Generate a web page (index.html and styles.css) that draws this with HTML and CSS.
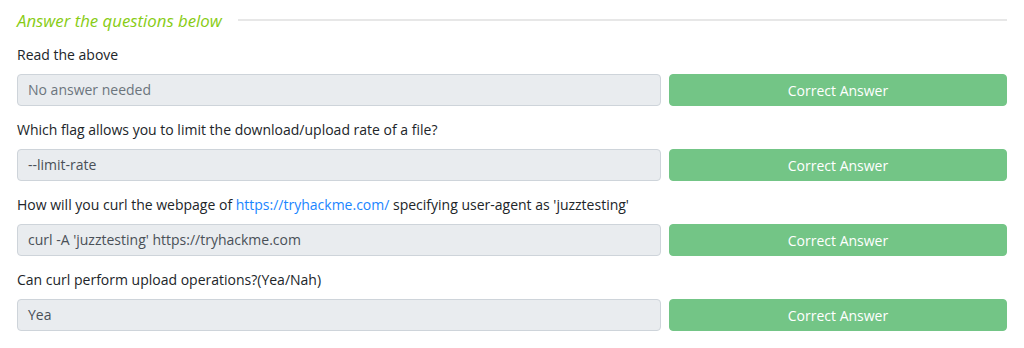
FILE: index.html
```html
<!DOCTYPE html>
<html lang="en">
<head>
<meta charset="utf-8">
<title>Answer the questions below</title>
<link rel="stylesheet" href="styles.css">
</head>
<body>
<section class="panel">
  <h2 class="heading"><span>Answer the questions below</span></h2>

  <div class="question">
    <p class="label">Read the above</p>
    <div class="row">
      <div class="answer placeholder">No answer needed</div>
      <button class="btn">Correct Answer</button>
    </div>
  </div>

  <div class="question">
    <p class="label">Which flag allows you to limit the download/upload rate of a file?</p>
    <div class="row">
      <div class="answer">--limit-rate</div>
      <button class="btn">Correct Answer</button>
    </div>
  </div>

  <div class="question">
    <p class="label">How will you curl the webpage of <a class="link" href="#">https://tryhackme.com/</a> specifying user-agent as 'juzztesting'</p>
    <div class="row">
      <div class="answer">curl -A 'juzztesting' https://tryhackme.com</div>
      <button class="btn">Correct Answer</button>
    </div>
  </div>

  <div class="question">
    <p class="label">Can curl perform upload operations?(Yea/Nah)</p>
    <div class="row">
      <div class="answer">Yea</div>
      <button class="btn">Correct Answer</button>
    </div>
  </div>
</section>
</body>
</html>
```
FILE: styles.css
```css
html, body {
  margin: 0;
  padding: 0;
  background: #ffffff;
}

body {
  font-family: "Open Sans", "Liberation Sans", sans-serif;
  font-size: 14px;
  color: #212529;
}

.panel {
  width: 990px;
  padding: 8px 17px 0 17px;
}

.heading {
  display: flex;
  align-items: center;
  gap: 16px;
  margin: 0;
  height: 24px;
  font-size: 16.8px;
  font-weight: 400;
  font-style: italic;
  color: #88cc14;
  white-space: nowrap;
}

.heading::after {
  content: "";
  flex: 1;
  height: 2px;
  background: #e7e7e7;
}

.question {
  margin-top: 12px;
}

.question + .question {
  margin-top: 13px;
}

.label {
  margin: 0 0 9px 0;
  line-height: 21px;
  color: #212529;
}

.link {
  color: #1a85ff;
  text-decoration: none;
}

.row {
  display: grid;
  grid-template-columns: 644px 338px;
  gap: 8px;
}

.answer {
  box-sizing: border-box;
  height: 32px;
  line-height: 30px;
  padding: 0 10px;
  background: #e9ecef;
  border: 1px solid #ced4da;
  border-radius: 4px;
  color: #495057;
  font-size: 14px;
}

.answer.placeholder {
  color: #6c757d;
}

.btn {
  box-sizing: border-box;
  height: 32px;
  padding: 0;
  margin: 0;
  border: 1px solid #73c586;
  border-radius: 4px;
  background: #73c586;
  color: #ffffff;
  font-family: inherit;
  font-size: 14px;
}
```
